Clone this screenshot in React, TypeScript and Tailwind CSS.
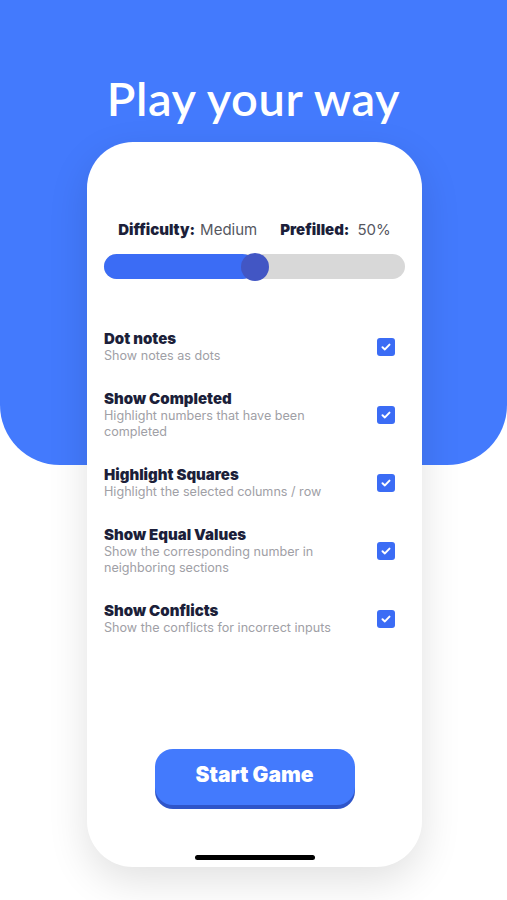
import React from "react";

const rows = [
  { t: "Dot notes", s: ["Show notes as dots"] },
  { t: "Show Completed", s: ["Highlight numbers that have been", "completed"] },
  { t: "Highlight Squares", s: ["Highlight the selected columns / row"] },
  { t: "Show Equal Values", s: ["Show the corresponding number in", "neighboring sections"] },
  { t: "Show Conflicts", s: ["Show the conflicts for incorrect inputs"] },
];

function Check() {
  return (
    <div className="w-[18px] h-[18px] rounded-[3px] bg-[#3b6cf5] flex items-center justify-center shrink-0">
      <svg width="10" height="8" viewBox="0 0 10 8" fill="none">
        <path d="M1.5 4.2 L3.9 6.4 L8.5 1.6" stroke="white" strokeWidth="2" strokeLinecap="round" strokeLinejoin="round" />
      </svg>
    </div>
  );
}

export default function App() {
  return (
    <div className="w-[507px] h-[900px] bg-white overflow-hidden" style={{ fontFamily: "Inter, 'Liberation Sans', sans-serif" }}>
      <div className="h-[465px] bg-[#437afd] rounded-b-[60px] pt-[70px] flex flex-col items-center">
        <h1
          className="text-white text-[47px] leading-[56px] font-semibold tracking-[0.6px]"
          style={{ fontFamily: "Lato, 'Open Sans', sans-serif" }}
        >
          Play your way
        </h1>
      </div>
      <div className="relative -mt-[323px] ml-[87px] w-[335px] h-[725px] bg-white rounded-[46px] shadow-[0_14px_40px_rgba(0,0,0,0.12)] flex flex-col">
        <div className="mt-[79px] flex justify-center gap-[23px] text-[15px] leading-[18px]">
          <div>
            <span className="font-black text-[#1c1f3a]">Difficulty:</span>
            <span className="text-[#55575f] ml-[5px]">Medium</span>
          </div>
          <div>
            <span className="font-black text-[#1c1f3a]">Prefilled:</span>
            <span className="text-[#55575f] ml-[8px]">50%</span>
          </div>
        </div>
        <div className="mx-[17px] mt-[15px] h-[25px] rounded-full bg-[#d8d8d8] flex items-center">
          <div className="w-[151px] h-full rounded-full bg-[#3b6cf5] flex items-center justify-end">
            <div className="w-[28px] h-[28px] rounded-full bg-[#4256c4] -mr-[14px] relative" />
          </div>
        </div>
        <div className="mt-[51px] pl-[17px] pr-[27px] flex flex-col gap-[26px]">
          {rows.map((r) => (
            <div key={r.t} className="flex items-center justify-between">
              <div className="flex flex-col">
                <div className="text-[15px] leading-[18px] font-black text-[#1c1f3a]">{r.t}</div>
                {r.s.map((l) => (
                  <div key={l} className="text-[12.6px] leading-[16px] text-[#a0a0a6]">{l}</div>
                ))}
              </div>
              <Check />
            </div>
          ))}
        </div>
        <div className="flex-1" />
        <div className="flex justify-center">
          <button className="w-[200px] h-[56px] rounded-[18px] bg-[#437afd] shadow-[0_4px_0_#2f55c9] text-white text-[21px] font-black pb-[4px]">
            Start Game
          </button>
        </div>
        <div className="flex justify-center mt-[50px] mb-[7px]">
          <div className="w-[120px] h-[5px] rounded-full bg-black" />
        </div>
      </div>
    </div>
  );
}
